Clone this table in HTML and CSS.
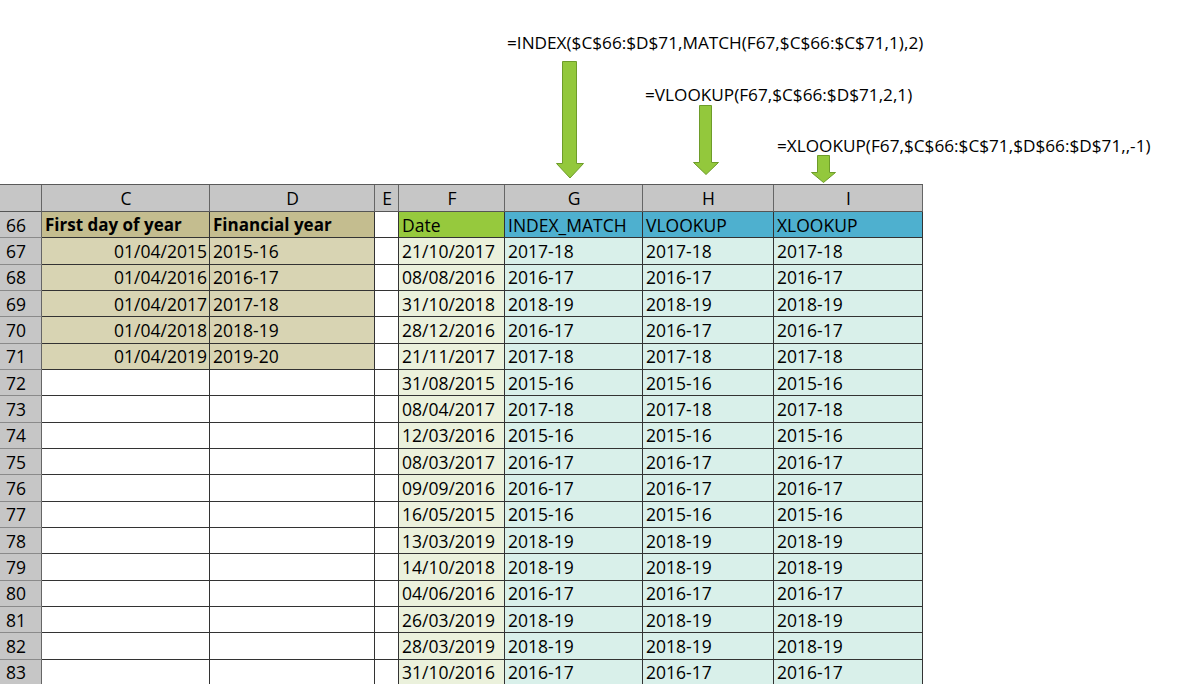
FILE: index.html
```html
<!DOCTYPE html>
<html>
<head>
<meta charset="utf-8">
<link rel="stylesheet" href="styles.css">
</head>
<body>
<div class="notes">
  <div class="note note-g">
    <div class="formula">=INDEX($C$66:$D$71,MATCH(F67,$C$66:$C$71,1),2)</div>
    <svg class="arrow a1" width="28" height="118" viewBox="0 0 28 118"><path d="M6.5 0.5H20.5V102.5H27.5L14 117L0.5 102.5H6.5Z"/></svg>
  </div>
  <div class="note note-h">
    <div class="formula">=VLOOKUP(F67,$C$66:$D$71,2,1)</div>
    <svg class="arrow a2" width="26" height="70" viewBox="0 0 26 70"><path d="M6.5 0.5H18.5V57.5H25.5L13 69.5L0.5 57.5H6.5Z"/></svg>
  </div>
  <div class="note note-i">
    <div class="formula">=XLOOKUP(F67,$C$66:$C$71,$D$66:$D$71,,-1)</div>
    <svg class="arrow a3" width="25" height="28" viewBox="0 0 25 28"><path d="M6.5 0.5H18.5V17.5H24.5L12.5 27.5L0.5 17.5H6.5Z"/></svg>
  </div>
</div>
<div class="sheet" id="sheet">
  <div class="c hd"></div><div class="c hd ctr">C</div><div class="c hd ctr">D</div><div class="c hd ctr">E</div><div class="c hd ctr">F</div><div class="c hd ctr">G</div><div class="c hd ctr">H</div><div class="c hd ctr">I</div>
  <div class="c rn">66</div><div class="c tanh b">First day of year</div><div class="c tanh b">Financial year</div><div class="c"></div><div class="c grh">Date</div><div class="c blh">INDEX_MATCH</div><div class="c blh">VLOOKUP</div><div class="c blh">XLOOKUP</div>
  <div class="c rn">67</div><div class="c tan r">01/04/2015</div><div class="c tan">2015-16</div><div class="c"></div><div class="c grd">21/10/2017</div><div class="c bld">2017-18</div><div class="c bld">2017-18</div><div class="c bld">2017-18</div>
  <div class="c rn">68</div><div class="c tan r">01/04/2016</div><div class="c tan">2016-17</div><div class="c"></div><div class="c grd">08/08/2016</div><div class="c bld">2016-17</div><div class="c bld">2016-17</div><div class="c bld">2016-17</div>
  <div class="c rn">69</div><div class="c tan r">01/04/2017</div><div class="c tan">2017-18</div><div class="c"></div><div class="c grd">31/10/2018</div><div class="c bld">2018-19</div><div class="c bld">2018-19</div><div class="c bld">2018-19</div>
  <div class="c rn">70</div><div class="c tan r">01/04/2018</div><div class="c tan">2018-19</div><div class="c"></div><div class="c grd">28/12/2016</div><div class="c bld">2016-17</div><div class="c bld">2016-17</div><div class="c bld">2016-17</div>
  <div class="c rn">71</div><div class="c tan r">01/04/2019</div><div class="c tan">2019-20</div><div class="c"></div><div class="c grd">21/11/2017</div><div class="c bld">2017-18</div><div class="c bld">2017-18</div><div class="c bld">2017-18</div>
  <div class="c rn">72</div><div class="c"></div><div class="c"></div><div class="c"></div><div class="c grd">31/08/2015</div><div class="c bld">2015-16</div><div class="c bld">2015-16</div><div class="c bld">2015-16</div>
  <div class="c rn">73</div><div class="c"></div><div class="c"></div><div class="c"></div><div class="c grd">08/04/2017</div><div class="c bld">2017-18</div><div class="c bld">2017-18</div><div class="c bld">2017-18</div>
  <div class="c rn">74</div><div class="c"></div><div class="c"></div><div class="c"></div><div class="c grd">12/03/2016</div><div class="c bld">2015-16</div><div class="c bld">2015-16</div><div class="c bld">2015-16</div>
  <div class="c rn">75</div><div class="c"></div><div class="c"></div><div class="c"></div><div class="c grd">08/03/2017</div><div class="c bld">2016-17</div><div class="c bld">2016-17</div><div class="c bld">2016-17</div>
  <div class="c rn">76</div><div class="c"></div><div class="c"></div><div class="c"></div><div class="c grd">09/09/2016</div><div class="c bld">2016-17</div><div class="c bld">2016-17</div><div class="c bld">2016-17</div>
  <div class="c rn">77</div><div class="c"></div><div class="c"></div><div class="c"></div><div class="c grd">16/05/2015</div><div class="c bld">2015-16</div><div class="c bld">2015-16</div><div class="c bld">2015-16</div>
  <div class="c rn">78</div><div class="c"></div><div class="c"></div><div class="c"></div><div class="c grd">13/03/2019</div><div class="c bld">2018-19</div><div class="c bld">2018-19</div><div class="c bld">2018-19</div>
  <div class="c rn">79</div><div class="c"></div><div class="c"></div><div class="c"></div><div class="c grd">14/10/2018</div><div class="c bld">2018-19</div><div class="c bld">2018-19</div><div class="c bld">2018-19</div>
  <div class="c rn">80</div><div class="c"></div><div class="c"></div><div class="c"></div><div class="c grd">04/06/2016</div><div class="c bld">2016-17</div><div class="c bld">2016-17</div><div class="c bld">2016-17</div>
  <div class="c rn">81</div><div class="c"></div><div class="c"></div><div class="c"></div><div class="c grd">26/03/2019</div><div class="c bld">2018-19</div><div class="c bld">2018-19</div><div class="c bld">2018-19</div>
  <div class="c rn">82</div><div class="c"></div><div class="c"></div><div class="c"></div><div class="c grd">28/03/2019</div><div class="c bld">2018-19</div><div class="c bld">2018-19</div><div class="c bld">2018-19</div>
  <div class="c rn">83</div><div class="c"></div><div class="c"></div><div class="c"></div><div class="c grd">31/10/2016</div><div class="c bld">2016-17</div><div class="c bld">2016-17</div><div class="c bld">2016-17</div>
</div>
</body>
</html>
```

FILE: styles.css
```css
html, body {
  margin: 0;
  padding: 0;
  background: #ffffff;
  overflow: hidden;
}
body {
  font-family: "Open Sans", "Noto Sans", sans-serif;
  font-size: 17px;
  color: #000;
  width: 1200px;
  height: 684px;
}
.notes {
  display: grid;
  grid-template-columns: 42px 168px 165px 24px 106px 138px 131px 149px;
  height: 184px;
}
.note {
  display: flex;
  flex-direction: column;
  align-items: flex-start;
  min-width: 0;
}
.formula {
  white-space: nowrap;
  line-height: 20px;
  height: 20px;
  font-size: 17.2px;
}
.note-g { grid-column: 6; padding: 33px 0 0 2px; }
.note-g .arrow { margin: 8px 0 0 49px; }
.note-h { grid-column: 7; padding: 85px 0 0 2px; }
.note-h .arrow { margin: 0 0 0 48px; }
.note-i { grid-column: 8; padding: 136px 0 0 3px; }
.note-i .arrow { margin: -1px 0 0 34px; }
.arrow path {
  fill: #93c83c;
  stroke: #6e9c2a;
  stroke-width: 1;
}
.sheet {
  display: grid;
  grid-template-columns: 42px 168px 165px 24px 106px 138px 131px 149px;
  grid-template-rows: 27px;
  grid-auto-rows: 26.33px;
  border-top: 1px solid #5a5a5a;
  width: 923px;
  font-size: 17.5px;
}
.c {
  border-right: 1px solid #333;
  border-bottom: 1px solid #333;
  box-sizing: border-box;
  padding: 0 2px 0 3px;
  white-space: nowrap;
  overflow: hidden;
  display: flex;
  align-items: center;
  line-height: 22px;
  background: #fff;
}
.hd {
  background: #c6c6c6;
  border-right-color: #666;
  border-bottom-color: #555;
}
.ctr { justify-content: center; }
.rn {
  background: #c6c6c6;
  border-right-color: #666;
  border-bottom-color: #8a8a8a;
  padding-left: 6px;
}
.r { justify-content: flex-end; }
.b { font-weight: 700; font-size: 17px; }
.tanh { background: #c4bd8f; }
.tan { background: #d8d4b3; }
.grh { background: #96c93d; }
.grd { background: #ebf1dc; }
.blh { background: #4eb0cf; }
.bld { background: #d9f0ea; }
```
